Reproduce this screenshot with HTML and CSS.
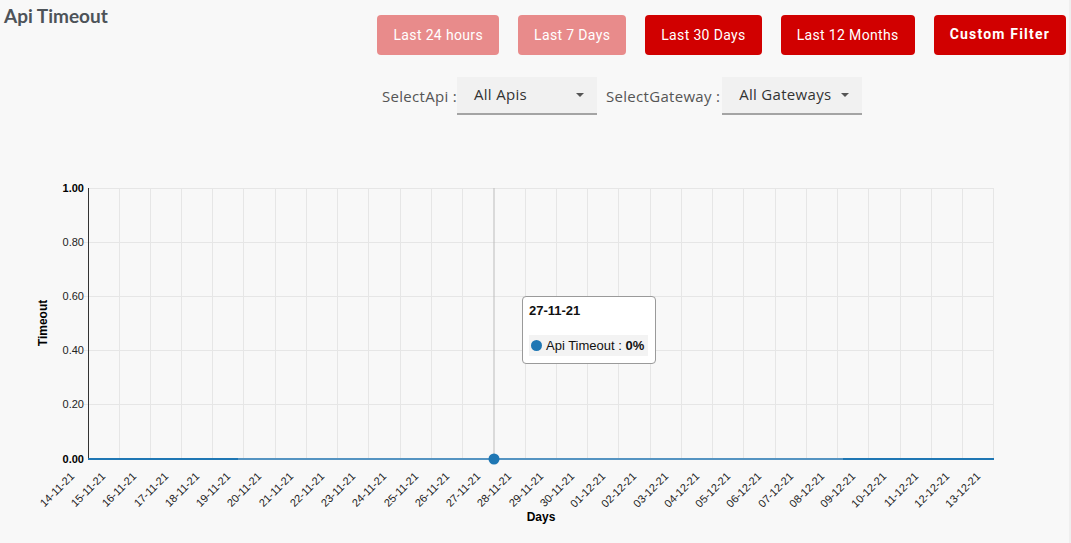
FILE: index.html
```html
<!DOCTYPE html>
<html lang="en">
<head>
  <meta charset="UTF-8">
  <meta name="viewport" content="width=device-width, initial-scale=1.0">
  <title>Api Timeout</title>
  <link rel="stylesheet" href="styles.css">
</head>
<body>
  <div class="page">
    <div class="top">
      <h2 class="title">Api Timeout</h2>
      <div class="filters">
        <button class="btn btn-light">Last 24 hours</button>
        <button class="btn btn-light">Last 7 Days</button>
        <button class="btn">Last 30 Days</button>
        <button class="btn">Last 12 Months</button>
        <button class="btn btn-custom">Custom Filter</button>
      </div>
    </div>

    <div class="selects">
      <label class="select-label">SelectApi :</label>
      <div class="select"><span>All Apis</span><i class="caret"></i></div>
      <label class="select-label gw">SelectGateway :</label>
      <div class="select"><span>All Gateways</span><i class="caret"></i></div>
    </div>

    <div class="chart">
      <svg class="chart-svg" width="1071" height="423" viewBox="0 120 1071 423">
        <g class="grid">
          <line x1="88" y1="188.5" x2="994" y2="188.5"/>
          <line x1="84" y1="242.5" x2="994" y2="242.5"/>
          <line x1="84" y1="296.5" x2="994" y2="296.5"/>
          <line x1="84" y1="350.5" x2="994" y2="350.5"/>
          <line x1="84" y1="404.5" x2="994" y2="404.5"/>
          <line x1="119.5" y1="188" x2="119.5" y2="459"/>
          <line x1="150.5" y1="188" x2="150.5" y2="459"/>
          <line x1="181.5" y1="188" x2="181.5" y2="459"/>
          <line x1="212.5" y1="188" x2="212.5" y2="459"/>
          <line x1="243.5" y1="188" x2="243.5" y2="459"/>
          <line x1="275.5" y1="188" x2="275.5" y2="459"/>
          <line x1="306.5" y1="188" x2="306.5" y2="459"/>
          <line x1="337.5" y1="188" x2="337.5" y2="459"/>
          <line x1="368.5" y1="188" x2="368.5" y2="459"/>
          <line x1="400.5" y1="188" x2="400.5" y2="459"/>
          <line x1="431.5" y1="188" x2="431.5" y2="459"/>
          <line x1="462.5" y1="188" x2="462.5" y2="459"/>
          <line x1="525.5" y1="188" x2="525.5" y2="459"/>
          <line x1="556.5" y1="188" x2="556.5" y2="459"/>
          <line x1="587.5" y1="188" x2="587.5" y2="459"/>
          <line x1="618.5" y1="188" x2="618.5" y2="459"/>
          <line x1="650.5" y1="188" x2="650.5" y2="459"/>
          <line x1="681.5" y1="188" x2="681.5" y2="459"/>
          <line x1="712.5" y1="188" x2="712.5" y2="459"/>
          <line x1="743.5" y1="188" x2="743.5" y2="459"/>
          <line x1="775.5" y1="188" x2="775.5" y2="459"/>
          <line x1="806.5" y1="188" x2="806.5" y2="459"/>
          <line x1="837.5" y1="188" x2="837.5" y2="459"/>
          <line x1="868.5" y1="188" x2="868.5" y2="459"/>
          <line x1="900.5" y1="188" x2="900.5" y2="459"/>
          <line x1="931.5" y1="188" x2="931.5" y2="459"/>
          <line x1="962.5" y1="188" x2="962.5" y2="459"/>
          <line x1="993.5" y1="188" x2="993.5" y2="459"/>
        </g>

        <line class="hover-line" x1="494" y1="188" x2="494" y2="459"/>
        <line class="axis" x1="88.5" y1="188" x2="88.5" y2="460"/>

        <g class="y-ticks">
          <text class="strong" x="84" y="192">1.00</text>
          <text x="84" y="246">0.80</text>
          <text x="84" y="300">0.60</text>
          <text x="84" y="354">0.40</text>
          <text x="84" y="408">0.20</text>
          <text class="strong" x="84" y="463">0.00</text>
        </g>
        <text class="axis-title" transform="rotate(-90 47 323)" x="47" y="323">Timeout</text>

        <line class="series" x1="88" y1="459" x2="238" y2="459"/>
        <line class="series faded" x1="238" y1="459" x2="843" y2="459"/>
        <line class="series" x1="843" y1="459" x2="994" y2="459"/>
        <circle class="point" cx="494" cy="459" r="5.5"/>

        <g class="x-ticks">
          <text x="75" y="477" transform="rotate(-45 75 477)">14-11-21</text>
          <text x="106" y="477" transform="rotate(-45 106 477)">15-11-21</text>
          <text x="137" y="477" transform="rotate(-45 137 477)">16-11-21</text>
          <text x="169" y="477" transform="rotate(-45 169 477)">17-11-21</text>
          <text x="200" y="477" transform="rotate(-45 200 477)">18-11-21</text>
          <text x="231" y="477" transform="rotate(-45 231 477)">19-11-21</text>
          <text x="262" y="477" transform="rotate(-45 262 477)">20-11-21</text>
          <text x="294" y="477" transform="rotate(-45 294 477)">21-11-21</text>
          <text x="325" y="477" transform="rotate(-45 325 477)">22-11-21</text>
          <text x="356" y="477" transform="rotate(-45 356 477)">23-11-21</text>
          <text x="387" y="477" transform="rotate(-45 387 477)">24-11-21</text>
          <text x="419" y="477" transform="rotate(-45 419 477)">25-11-21</text>
          <text x="450" y="477" transform="rotate(-45 450 477)">26-11-21</text>
          <text x="481" y="477" transform="rotate(-45 481 477)">27-11-21</text>
          <text x="512" y="477" transform="rotate(-45 512 477)">28-11-21</text>
          <text x="544" y="477" transform="rotate(-45 544 477)">29-11-21</text>
          <text x="575" y="477" transform="rotate(-45 575 477)">30-11-21</text>
          <text x="606" y="477" transform="rotate(-45 606 477)">01-12-21</text>
          <text x="637" y="477" transform="rotate(-45 637 477)">02-12-21</text>
          <text x="669" y="477" transform="rotate(-45 669 477)">03-12-21</text>
          <text x="700" y="477" transform="rotate(-45 700 477)">04-12-21</text>
          <text x="731" y="477" transform="rotate(-45 731 477)">05-12-21</text>
          <text x="762" y="477" transform="rotate(-45 762 477)">06-12-21</text>
          <text x="794" y="477" transform="rotate(-45 794 477)">07-12-21</text>
          <text x="825" y="477" transform="rotate(-45 825 477)">08-12-21</text>
          <text x="856" y="477" transform="rotate(-45 856 477)">09-12-21</text>
          <text x="887" y="477" transform="rotate(-45 887 477)">10-12-21</text>
          <text x="919" y="477" transform="rotate(-45 919 477)">11-12-21</text>
          <text x="950" y="477" transform="rotate(-45 950 477)">12-12-21</text>
          <text x="981" y="477" transform="rotate(-45 981 477)">13-12-21</text>
        </g>
        <text class="axis-title" x="541" y="521" text-anchor="middle">Days</text>
      </svg>

      <div class="tooltip">
        <div class="tooltip-date">27-11-21</div>
        <div class="tooltip-row">
          <span class="dot"></span>
          <span>Api Timeout : <b>0%</b></span>
        </div>
      </div>
    </div>
  </div>
</body>
</html>
```

FILE: styles.css
```css
body {
  margin: 0;
  padding: 0;
  background-color: #f8f8f8;
  font-family: "Open Sans", Arial, sans-serif;
}

.page {
  width: 1069px;
  height: 543px;
  border-right: 2px solid #efefef;
  overflow: hidden;
}

.top {
  display: flex;
  justify-content: space-between;
  align-items: flex-start;
  height: 55px;
  padding: 0 3px 0 4px;
}

.title {
  margin: 4px 0 0;
  font-family: Lato, "Open Sans", sans-serif;
  font-size: 19px;
  font-weight: bold;
  color: #4d5359;
}

.filters {
  display: flex;
  gap: 19px;
  margin-top: 15px;
}

.btn {
  height: 40px;
  padding: 0 16px;
  border: none;
  border-radius: 4px;
  background-color: #d10000;
  color: white;
  font-family: Roboto, sans-serif;
  font-size: 14px;
  letter-spacing: 0.35px;
  cursor: pointer;
}

.btn-light {
  background-color: #e88b8b;
}

.btn-custom {
  font-weight: bold;
  letter-spacing: 1.2px;
  padding-bottom: 2px;
}

.selects {
  display: flex;
  align-items: center;
  margin-top: 22px;
  padding-left: 382px;
  height: 38px;
}

.select-label {
  font-size: 15px;
  letter-spacing: 0.3px;
  color: #555;
}

.select-label.gw {
  margin-left: 9px;
  margin-right: 2px;
}

.select {
  position: relative;
  display: flex;
  align-items: center;
  width: 140px;
  height: 38px;
  padding: 0 0 3px 17px;
  box-sizing: border-box;
  background-color: #f1f1f1;
  border-bottom: 2px solid #a4a4a4;
  font-size: 15px;
  letter-spacing: 0.3px;
  color: #333;
}

.caret {
  position: absolute;
  right: 13px;
  top: 16px;
  width: 0;
  height: 0;
  border-left: 4px solid transparent;
  border-right: 4px solid transparent;
  border-top: 4px solid #555;
}

.chart {
  position: relative;
  margin-top: 5px;
}

.chart-svg {
  display: block;
  font-family: "Liberation Sans", Arial, sans-serif;
}

.grid line {
  stroke: #e6e6e6;
  stroke-width: 1;
}

.axis {
  stroke: #333;
  stroke-width: 1;
}

.hover-line {
  stroke: #bcbcbc;
  stroke-width: 1;
}

.y-ticks text {
  font-size: 11px;
  text-anchor: end;
  fill: #222;
}

.y-ticks .strong {
  font-weight: bold;
  fill: #000;
}

.x-ticks text {
  font-size: 11px;
  text-anchor: end;
  fill: #222;
}

.axis-title {
  font-size: 12px;
  font-weight: bold;
  fill: #000;
  text-anchor: middle;
}

.series {
  stroke: #1f77b4;
  stroke-width: 2;
}

.series.faded {
  stroke: #5594c2;
}

.point {
  fill: #1f77b4;
}

.tooltip {
  position: absolute;
  left: 522px;
  top: 176px;
  width: 134px;
  height: 68px;
  box-sizing: border-box;
  background: white;
  border: 1px solid #9a9a9a;
  border-radius: 4px;
  padding: 6px 7px 0 6px;
  font-family: "Liberation Sans", Arial, sans-serif;
  color: #111;
}

.tooltip-date {
  font-size: 13px;
  font-weight: bold;
  height: 32px;
}

.tooltip-row {
  display: flex;
  align-items: center;
  gap: 4px;
  height: 21px;
  padding-left: 2px;
  background-color: #f3f3f3;
  font-size: 13px;
}

.dot {
  width: 11px;
  height: 11px;
  border-radius: 50%;
  background-color: #1f77b4;
}
```
